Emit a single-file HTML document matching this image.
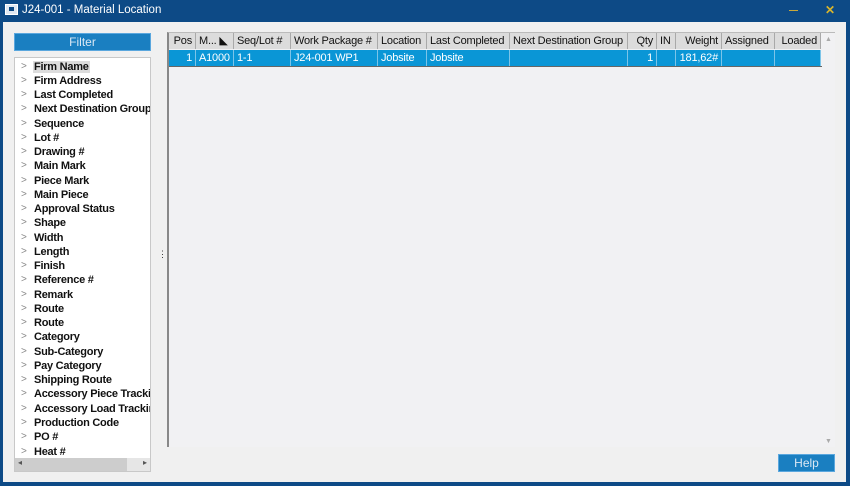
<!DOCTYPE html>
<html><head><style>
*{margin:0;padding:0;box-sizing:border-box}
body{width:850px;height:486px;background:#0d4a86;font-family:"Liberation Sans",sans-serif;position:relative;overflow:hidden}
.title{position:absolute;left:22px;top:4px;color:#fff;font-size:11.5px}
.ico{position:absolute;left:5px;top:4px;width:13px;height:11px;background:#dfe8f2;border:1px solid #fff}
.ico:after{content:"";position:absolute;left:3px;top:2px;width:5px;height:4px;background:#0d4a86}
.min{position:absolute;left:789px;top:10px;width:9px;height:1px;background:#c8a83a}
.x{position:absolute;left:825px;top:3px;color:#d9b52c;font-size:12px;font-weight:bold}
.win{position:absolute;left:3px;top:22px;width:843px;height:460px;background:#f0f0f0}
.btn{position:absolute;background:#1a7fc1;border:1px solid #5aa7de;color:#dbe8f4;font-size:12px;text-align:center}
.tree{position:absolute;left:14px;top:57px;width:137px;height:415px;background:#fff;border:1px solid #c8c8c8;overflow:hidden}
.item{position:absolute;left:0;height:14px;font-size:11px;font-weight:bold;color:#111;white-space:nowrap;letter-spacing:-0.25px}
.item span.a{position:absolute;left:6px;top:0;color:#888;font-weight:normal;font-size:10px}
.item span.t{position:absolute;left:18px;top:0;padding:0 1px}
.hs{position:absolute;left:0;bottom:0;width:135px;height:13px;background:#e6e6e6}
.grid{position:absolute;left:167px;top:32px;width:668px;height:415px;background:#f1f1f3;border-left:2px solid #888;border-top:1px solid #bbb}
.c{position:absolute;height:16px;font-size:11px;line-height:16px;padding:0 3px;white-space:nowrap;overflow:hidden;border-right:1px solid #a9a9a9;letter-spacing:-0.2px}
.h{top:0;background:#dcdcdc;color:#111}
.r{top:17px;background:#0a96d6;color:#fff;border-right:1px solid #7cc4e8}
</style></head><body>
<div class="ico"></div><div class="title">J24-001 - Material Location</div>
<div class="min"></div><div class="x">✕</div>
<div class="win"></div>
<div class="btn" style="left:14px;top:33px;width:137px;height:18px;line-height:16px">Filter</div>
<div class="tree">
<div id="items"></div>
<div class="hs"><div style="position:absolute;left:0;top:0;width:112px;height:13px;background:#cdcdcd"></div><span style="position:absolute;left:3px;top:0;font-size:8px;color:#555">◂</span><span style="position:absolute;right:3px;top:0;font-size:8px;color:#555">▸</span></div>
</div>
<div style="position:absolute;left:158px;top:249px;font-size:9px;color:#333">⋮</div>
<div class="grid">
<div style="position:absolute;left:0;top:0;width:653px;height:34px;border-bottom:1px solid #666"></div>
</div>
<div id="cols"></div>
<div style="position:absolute;left:825px;top:36px;font-size:7px;color:#aaa">▲</div>
<div style="position:absolute;left:825px;top:438px;font-size:7px;color:#aaa">▼</div>
<div class="btn" style="left:778px;top:454px;width:57px;height:18px;line-height:16px">Help</div>
<script>
var n=["Firm Name","Firm Address","Last Completed","Next Destination Group","Sequence","Lot #","Drawing #","Main Mark","Piece Mark","Main Piece","Approval Status","Shape","Width","Length","Finish","Reference #","Remark","Route","Route","Category","Sub-Category","Pay Category","Shipping Route","Accessory Piece Tracking","Accessory Load Tracking","Production Code","PO #","Heat #"];
var h="";n.forEach(function(t,i){h+='<div class="item" style="top:'+(2.5+i*14.26)+'px"><span class="a">&gt;</span><span class="t"'+(i==0?' style="background:#dcdcdc"':'')+'>'+t+'</span></div>'});
document.getElementById("items").innerHTML=h;
var c=[["Pos",169,196,"1","r"],["M...  ◣",196,234,"A1000"],["Seq/Lot #",234,291,"1-1"],["Work Package #",291,378,"J24-001 WP1"],["Location",378,427,"Jobsite"],["Last Completed",427,510,"Jobsite"],["Next Destination Group",510,628,""],["Qty",628,657,"1","r"],["IN",657,676,""],["Weight",676,722,"181,62#","r"],["Assigned",722,775,""],["Loaded",775,821,"","r"]];
var g="";c.forEach(function(x){var w=x[2]-x[1],al=x[4]?'text-align:right;':'';
g+='<div class="c h" style="left:'+x[1]+'px;top:33px;width:'+w+'px;'+al+'">'+x[0]+'</div>';
g+='<div class="c r" style="left:'+x[1]+'px;top:50px;width:'+w+'px;'+al+'">'+x[3]+'</div>';});
document.getElementById("cols").innerHTML=g;
</script>
</body></html>
